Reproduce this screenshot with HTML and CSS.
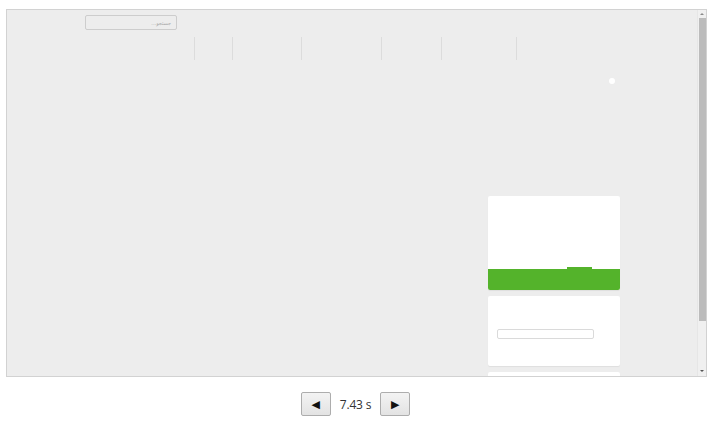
FILE: index.html
```html
<!DOCTYPE html>
<html lang="en">
<head>
    <meta charset="UTF-8">
    <title>Recording playback</title>
    <link rel="stylesheet" href="styles.css">
</head>
<body>
    <div class="frame">
        <div class="page">
            <div class="search">
                <span class="placeholder" dir="rtl">جستجو...</span>
            </div>

            <div class="nav">
                <span class="sep first"></span>
                <span class="sep w38"></span>
                <span class="sep w69"></span>
                <span class="sep w80"></span>
                <span class="sep w60"></span>
                <span class="sep w75"></span>
            </div>

            <div class="dot-row">
                <span class="dot"></span>
            </div>

            <div class="cards">
                <div class="card card-promo">
                    <div class="promo-band">
                        <span class="promo-tab"></span>
                    </div>
                </div>
                <div class="card card-form">
                    <div class="field"></div>
                </div>
                <div class="card card-more"></div>
            </div>
        </div>

        <div class="scrollbar">
            <span class="arrow up"></span>
            <span class="thumb"></span>
            <span class="arrow down"></span>
        </div>
    </div>

    <div class="player">
        <button class="step">&#9664;</button>
        <span class="time">7.43 s</span>
        <button class="step">&#9654;</button>
    </div>
</body>
</html>
```

FILE: styles.css
```css
* {
    margin: 0;
    padding: 0;
    box-sizing: border-box;
}

body {
    background: #fff;
    font-family: 'Open Sans', 'DejaVu Sans', sans-serif;
    width: 713px;
    height: 424px;
    overflow: hidden;
}

.frame {
    margin: 9px 0 0 6px;
    width: 701px;
    height: 368px;
    border: 1px solid #d2d2d2;
    background: #ededed;
    display: flex;
    overflow: hidden;
}

.page {
    flex: 1;
    height: 100%;
    overflow: hidden;
}

.search {
    margin: 5px 0 0 78px;
    width: 92px;
    height: 15px;
    border: 1px solid #cdcdcd;
    border-radius: 2px;
    display: flex;
    align-items: center;
    justify-content: flex-end;
    padding-right: 5px;
}

.placeholder {
    font-family: 'DejaVu Sans', sans-serif;
    font-size: 5px;
    color: #a9a9a9;
}

.nav {
    margin-top: 7px;
    display: flex;
    height: 23px;
}

.sep {
    width: 1px;
    height: 23px;
    background: #dcdcdc;
}

.sep.first { margin-left: 187px; }
.sep.w38 { margin-left: 37px; }
.sep.w69 { margin-left: 68px; }
.sep.w80 { margin-left: 79px; }
.sep.w60 { margin-left: 59px; }
.sep.w75 { margin-left: 74px; }

.dot-row {
    margin-top: 18px;
    padding-left: 602px;
    height: 6px;
}

.dot {
    display: block;
    width: 6px;
    height: 6px;
    border-radius: 50%;
    background: #fff;
}

.cards {
    margin: 112px 0 0 481px;
    width: 132px;
    display: flex;
    flex-direction: column;
    gap: 6px;
}

.card {
    background: #fff;
    border-radius: 2px;
    box-shadow: 0 1px 1px rgba(0, 0, 0, 0.06);
}

.card-promo {
    height: 94px;
    display: flex;
    flex-direction: column;
    justify-content: flex-end;
}

.promo-band {
    position: relative;
    height: 21px;
    background: #54b32b;
    border-radius: 0 0 2px 2px;
}

.promo-tab {
    position: absolute;
    left: 79px;
    top: -2px;
    width: 25px;
    height: 2px;
    background: #54b32b;
}

.card-form {
    height: 70px;
    padding: 33px 0 0 9px;
}

.field {
    width: 97px;
    height: 10px;
    border: 1px solid #dadada;
    border-radius: 2px;
}

.card-more {
    height: 20px;
}

.scrollbar {
    width: 9px;
    height: 100%;
    background: #f0f0f0;
    border-left: 1px solid #e6e6e6;
    display: flex;
    flex-direction: column;
    align-items: center;
    padding: 3px 0;
}

.arrow {
    width: 0;
    height: 0;
    border-left: 2px solid transparent;
    border-right: 2px solid transparent;
}

.arrow.up {
    border-bottom: 2px solid #8a8a8a;
}

.arrow.down {
    border-top: 2px solid #555;
    margin-top: auto;
    margin-bottom: 1px;
}

.thumb {
    margin-top: 3px;
    width: 7px;
    height: 303px;
    background: #bcbcbc;
}

.player {
    margin-top: 15px;
    display: flex;
    justify-content: center;
    align-items: center;
    gap: 9px;
    padding-right: 2px;
}

.step {
    width: 30px;
    height: 24px;
    border: 1px solid #adadad;
    border-radius: 2px;
    background: linear-gradient(#f3f3f3, #e3e3e3);
    color: #111;
    font-size: 11px;
    font-family: 'DejaVu Sans', sans-serif;
}

.time {
    font-size: 12px;
    color: #333;
    letter-spacing: -0.2px;
}
```
